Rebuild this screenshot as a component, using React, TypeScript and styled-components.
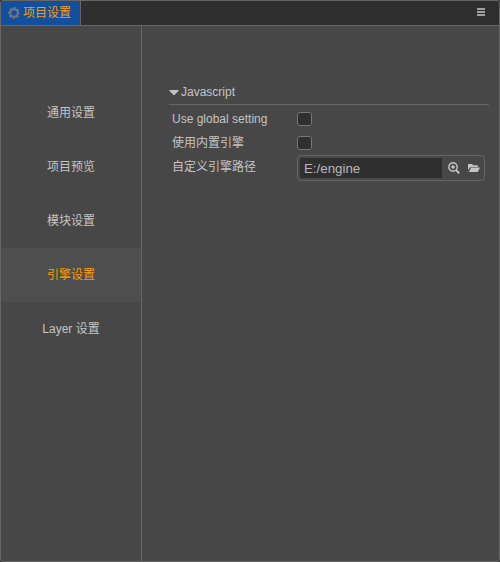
import React from "react";
import styled, { createGlobalStyle } from "styled-components";
import { FaCaretDown } from "react-icons/fa";

const GlobalStyle = createGlobalStyle`
  * { box-sizing: border-box; }
  body { margin: 0; background: #333; }
`;

const Window = styled.div`
  width: 500px;
  height: 562px;
  display: flex;
  flex-direction: column;
  background: #474747;
  border: 1px solid #666;
  border-radius: 3px;
  overflow: hidden;
  color: #c4c4c4;
  font: 12px/18px "Liberation Sans", "Noto Sans CJK SC", sans-serif;
  svg { display: block; flex: none; }
`;

const TitleBar = styled.header`
  height: 25px;
  flex: none;
  display: flex;
  justify-content: space-between;
  background: #2f2f2f;
  border-bottom: 1px solid #666;
`;

const Tab = styled.div`
  width: 80px;
  height: 24px;
  display: flex;
  align-items: center;
  gap: 3px;
  padding-left: 7px;
  background: #12509e;
  border-right: 1px solid #666;
  color: #f99b0c;
  white-space: nowrap;
`;

const MenuButton = styled.div`
  padding: 7px 14px 0 0;
`;

const Body = styled.div`
  flex: 1;
  display: flex;
`;

const Sidebar = styled.nav`
  width: 141px;
  padding-top: 60px;
  border-right: 1px solid #666;
`;

const NavItem = styled.div<{ $active?: boolean }>`
  height: 54px;
  display: flex;
  align-items: center;
  justify-content: center;
  color: ${(p) => (p.$active ? "#fd9b00" : "#c4c4c4")};
  background: ${(p) => (p.$active ? "#4e4e4e" : "transparent")};
`;

const Content = styled.main`
  flex: 1;
  padding: 54px 10px 0 27px;
`;

const SectionTitle = styled.div`
  height: 25px;
  display: flex;
  align-items: center;
  gap: 2px;
  margin-bottom: 2px;
  border-bottom: 1px solid #666;
`;

const Caret = styled(FaCaretDown)`
  width: 10px;
  height: 16px;
`;

const Row = styled.div`
  height: 24px;
  display: flex;
  align-items: center;
  padding-left: 3px;
`;

const PathRow = styled(Row)`
  height: 26px;
  align-items: flex-start;
`;

const Label = styled.div`
  width: 125px;
  height: 18px;
`;

const PathLabel = styled(Label)`
  margin-top: 3px;
`;

const Checkbox = styled.div`
  width: 15px;
  height: 14px;
  border: 1px solid #777;
  border-radius: 3px;
  background: #2f2f2f;
`;

const PathField = styled.div`
  width: 188px;
  height: 26px;
  display: flex;
  align-items: center;
  padding-left: 2px;
  border: 1px solid #666;
  border-radius: 4px;
`;

const PathInput = styled.div`
  width: 142px;
  height: 20px;
  padding-left: 4px;
  border-radius: 2px 0 0 2px;
  background: #2f2f2f;
  color: #b8b8b8;
  font-size: 13.3px;
  line-height: 21px;
`;

const FieldActions = styled.div`
  display: flex;
  align-items: center;
  gap: 8px;
  padding-left: 6px;
`;

const GearIcon = () => (
  <svg width="12" height="12" viewBox="0 0 12 12" fill="none" stroke="#6f7780">
    <circle cx="6" cy="6" r="3.8" strokeWidth="2" />
    <circle cx="6" cy="6" r="5.1" strokeWidth="1.6" strokeDasharray="2.1 1.905" strokeDashoffset="1.05" />
  </svg>
);

const MenuIcon = () => (
  <svg width="8" height="8" viewBox="0 0 8 8" fill="#a0a0a0" shapeRendering="crispEdges">
    <path d="M0 0h8v2H0zM0 3h8v2H0zM0 6h8v2H0z" />
  </svg>
);

const LocateIcon = () => (
  <svg width="12" height="12" viewBox="0 0 12 12" fill="none" stroke="#c4c4c4">
    <circle cx="5" cy="5" r="4.2" strokeWidth="1.4" />
    <circle cx="5" cy="5" r="1.8" fill="#c4c4c4" stroke="none" />
    <path d="M8.1 8.1 11.2 11.2" strokeWidth="2" />
  </svg>
);

const FolderIcon = () => (
  <svg width="12" height="12" viewBox="0 0 12 12" fill="#c4c4c4">
    <path d="M0 8.2V2.7Q0 2 .7 2H4l1.2 1.2h4q.8 0 .8.8v.9H3.1q-.8 0-1.2.7z" />
    <path d="M3.2 5.6H12L10.2 9.3q-.3.7-1 .7H.8z" />
  </svg>
);

const items = ["通用设置", "项目预览", "模块设置", "引擎设置", "Layer 设置"];

export default function App() {
  return (
    <Window>
      <GlobalStyle />
      <TitleBar>
        <Tab><GearIcon />项目设置</Tab>
        <MenuButton><MenuIcon /></MenuButton>
      </TitleBar>
      <Body>
        <Sidebar>
          {items.map((t) => <NavItem key={t} $active={t === "引擎设置"}>{t}</NavItem>)}
        </Sidebar>
        <Content>
          <SectionTitle><Caret />Javascript</SectionTitle>
          <Row><Label>Use global setting</Label><Checkbox /></Row>
          <Row><Label>使用内置引擎</Label><Checkbox /></Row>
          <PathRow>
            <PathLabel>自定义引擎路径</PathLabel>
            <PathField>
              <PathInput>E:/engine</PathInput>
              <FieldActions><LocateIcon /><FolderIcon /></FieldActions>
            </PathField>
          </PathRow>
        </Content>
      </Body>
    </Window>
  );
}
